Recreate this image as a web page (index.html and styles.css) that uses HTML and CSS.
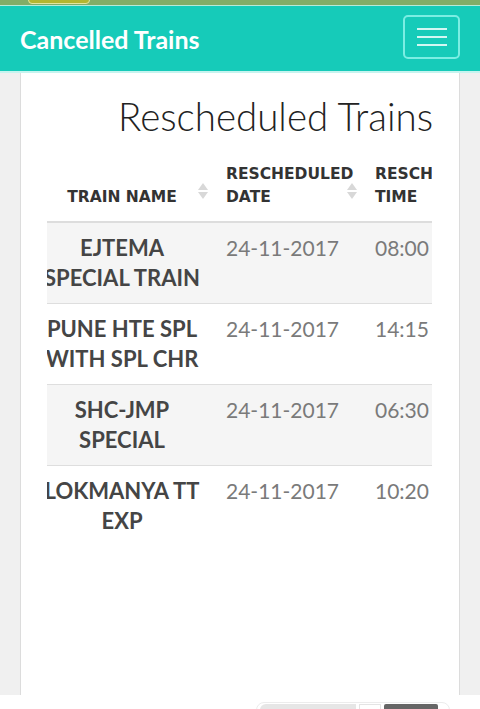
FILE: index.html
```html
<!DOCTYPE html>
<html>
<head>
<meta charset="utf-8">
<link rel="stylesheet" href="styles.css">
</head>
<body>
<div class="topstrip"><span class="pill"></span></div>
<nav class="navbar">
  <span class="brand">Cancelled Trains</span>
  <button class="toggler" aria-label="menu">
    <span class="bar"></span><span class="bar"></span><span class="bar"></span>
  </button>
</nav>
<main class="page">
  <section class="card">
    <div class="clip">
      <div class="wide">
        <h1 class="heading">Rescheduled Trains</h1>
        <table class="trains">
          <thead>
            <tr>
              <th class="c1 sortable">TRAIN NAME<span class="sort"></span></th>
              <th class="c2 sortable">RESCHEDULED<br>DATE<span class="sort"></span></th>
              <th class="c3">RESCHEDULED<br>TIME</th>
            </tr>
          </thead>
          <tbody>
            <tr class="odd"><td class="name">EJTEMA<br>SPECIAL TRAIN</td><td class="val">24-11-2017</td><td class="val">08:00</td></tr>
            <tr><td class="name">PUNE HTE SPL<br>WITH SPL CHR</td><td class="val">24-11-2017</td><td class="val">14:15</td></tr>
            <tr class="odd"><td class="name">SHC-JMP<br>SPECIAL</td><td class="val">24-11-2017</td><td class="val">06:30</td></tr>
            <tr><td class="name">LOKMANYA TT<br>EXP</td><td class="val">24-11-2017</td><td class="val">10:20</td></tr>
          </tbody>
        </table>
      </div>
    </div>
  </section>
  <div class="footer">
    <div class="dock">
      <span class="dock-pill"></span>
      <span class="dock-sq"></span>
      <span class="dock-dark"></span>
    </div>
  </div>
</main>
</body>
</html>
```
FILE: styles.css
```css
* { box-sizing: border-box; }
html, body { margin: 0; padding: 0; }
body {
  background: #f0f0f0;
  font-family: Lato, "Open Sans", sans-serif;
  width: 480px;
  height: 709px;
  overflow: hidden;
}
.topstrip {
  height: 6px;
  background: #82ad68;
  border-bottom: 1px solid #b9ead7;
  position: relative;
}
.pill {
  position: absolute;
  left: 28px;
  top: -4px;
  width: 62px;
  height: 8px;
  border-radius: 4px;
  background: #b3b631;
  border: 1px solid #e3e6a0;
}
.navbar {
  height: 67px;
  background: #16cbb9;
  border-bottom: 2px solid #c6f4ef;
  display: flex;
  align-items: center;
  justify-content: space-between;
  padding: 0 20px 0 20px;
}
.brand {
  color: #ffffff;
  font-family: Lato, sans-serif;
  font-weight: 700;
  font-size: 25px;
}
.toggler {
  width: 57px;
  height: 44px;
  border: 2px solid #7beee3;
  border-radius: 5px;
  background: transparent;
  display: flex;
  flex-direction: column;
  align-items: center;
  justify-content: center;
  gap: 6px;
  padding: 0;
  margin-top: -4px;
}
.bar {
  display: block;
  width: 30px;
  height: 2px;
  background: #d2f7f3;
}
.page {
  display: flex;
  flex-direction: column;
  height: 636px;
}
.card {
  flex: 1;
  margin: 0 20px;
  background: #ffffff;
  border-left: 1px solid #dcdcdc;
  border-right: 1px solid #dcdcdc;
  padding: 0 26px;
}
.clip {
  overflow: hidden;
  width: 385px;
}
.wide {
  width: 500px;
  margin-left: -21px;
}
.heading {
  margin: 0;
  padding: 21px 0 0 92px;
  font-family: Lato, sans-serif;
  font-weight: 300;
  font-size: 38.5px;
  line-height: 44px;
  color: #222;
  white-space: nowrap;
}
.trains {
  border-collapse: collapse;
  margin-top: 23px;
  width: 491px;
  table-layout: fixed;
}
.trains th {
  font-family: "DejaVu Sans", sans-serif;
  font-weight: 700;
  font-size: 15.5px;
  line-height: 23px;
  color: #333;
  text-align: left;
  vertical-align: bottom;
  padding: 2px 8px 12px;
  border-bottom: 2px solid #dddddd;
  position: relative;
  white-space: nowrap;
}
.trains th.c1 { width: 192px; text-align: center; }
.trains th.c2 { width: 149px; }
.trains th.c3 { width: 150px; }
.sort {
  position: absolute;
  right: 10px;
  top: 50%;
  margin-top: -9px;
  width: 10px;
  height: 18px;
}
.sort::before, .sort::after {
  content: "";
  position: absolute;
  left: 0;
  border-left: 5px solid transparent;
  border-right: 5px solid transparent;
}
.sort::before { top: 1px; border-bottom: 7px solid #d8d8d8; }
.sort::after { bottom: 1px; border-top: 7px solid #d8d8d8; }
.trains td {
  padding: 10px 8px;
  line-height: 30px;
  vertical-align: top;
  border-bottom: 1px solid #dedede;
  white-space: nowrap;
}
.trains tr.odd td { background: #f5f5f5; }
.trains tbody tr:last-child td { border-bottom: none; }
.name {
  font-weight: 700;
  font-size: 22px;
  color: #454545;
  text-align: center;
}
.val {
  font-weight: 400;
  font-size: 21px;
  color: #7a7a7a;
}
.footer {
  height: 14px;
  background: #ffffff;
  position: relative;
}
.dock {
  position: absolute;
  left: 256px;
  top: 7px;
  width: 194px;
  height: 12px;
  border: 1px solid #ececec;
  border-radius: 8px 8px 0 0;
  display: flex;
  gap: 3px;
  padding: 1px 0 0 3px;
}
.dock-pill {
  width: 96px;
  height: 10px;
  background: #e6e6e6;
  border-radius: 6px 0 0 0;
}
.dock-sq {
  width: 22px;
  height: 10px;
  background: #fff;
  border: 1px solid #e4e4e4;
}
.dock-dark {
  width: 54px;
  height: 10px;
  background: #666;
  border-radius: 2px 2px 0 0;
}
```
